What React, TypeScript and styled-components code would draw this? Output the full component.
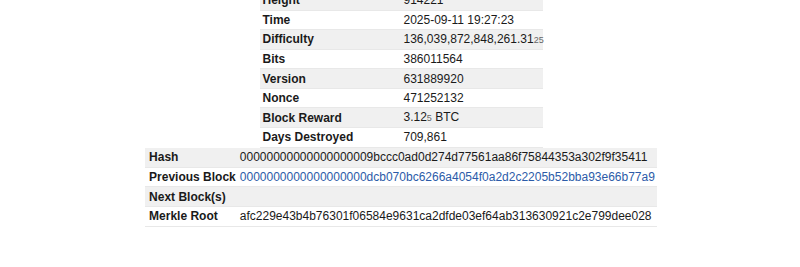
import React from "react";
import styled, { createGlobalStyle } from "styled-components";

const Global = createGlobalStyle`
  html, body { margin: 0; padding: 0; background: #ffffff; }
  body { font-family: "Liberation Sans", Arial, Helvetica, sans-serif; color: #1a1a1a; overflow: hidden; }
`;

const Page = styled.div`
  display: flex;
  flex-direction: column;
  align-items: center;
  margin-top: -9.6px;
  padding-left: 2px;
  width: 798px;
`;

const Table = styled.table<{ $width?: number; $fixed?: boolean }>`
  border-collapse: collapse;
  ${(p) => (p.$width ? `width: ${p.$width}px;` : "")}
  ${(p) => (p.$fixed ? "table-layout: fixed;" : "")}
  font-size: 12px;
`;

const Row = styled.tr<{ $shade: boolean }>`
  background: ${(p) => (p.$shade ? "#f0f0f0" : "#ffffff")};
  border-bottom: 1px solid #e8e8e8;
  height: 19.6px;
`;

const Label = styled.th<{ $pad?: number }>`
  text-align: left;
  font-weight: bold;
  padding: 0 2px 0 ${(p) => p.$pad ?? 3}px;
  line-height: 14px;
  white-space: nowrap;
  color: #1a1a1a;
`;

const Value = styled.td<{ $pad?: number }>`
  padding: 0 ${(p) => p.$pad ?? 3}px;
  line-height: 14px;
  white-space: nowrap;
  color: #1a1a1a;
`;

const Small = styled.span`
  font-size: 9px;
  color: #666666;
`;

const Link = styled.a`
  color: #2c5ba8;
  text-decoration: none;
`;

type Item = { label: string; value: React.ReactNode };

const top: Item[] = [
  { label: "Height", value: "914221" },
  { label: "Time", value: "2025-09-11 19:27:23" },
  {
    label: "Difficulty",
    value: (
      <>
        136,039,872,848,261.31<Small>25</Small>
      </>
    ),
  },
  { label: "Bits", value: "386011564" },
  { label: "Version", value: "631889920" },
  { label: "Nonce", value: "471252132" },
  {
    label: "Block Reward",
    value: (
      <>
        3.12<Small>5</Small> BTC
      </>
    ),
  },
  { label: "Days Destroyed", value: "709,861" },
];

const bottom: Item[] = [
  { label: "Hash", value: "00000000000000000009bccc0ad0d274d77561aa86f75844353a302f9f35411" },
  {
    label: "Previous Block",
    value: <Link href="#">0000000000000000000dcb070bc6266a4054f0a2d2c2205b52bba93e66b77a9</Link>,
  },
  { label: "Next Block(s)", value: "" },
  { label: "Merkle Root", value: "afc229e43b4b76301f06584e9631ca2dfde03ef64ab313630921c2e799dee028" },
];

export default function App() {
  return (
    <>
      <Global />
      <Page>
        <Table $width={283} $fixed>
          <colgroup>
            <col style={{ width: "141px" }} />
            <col />
          </colgroup>
          <tbody>
            {top.map((it, i) => (
              <Row key={it.label} $shade={i % 2 === 0}>
                <Label>{it.label}</Label>
                <Value>{it.value}</Value>
              </Row>
            ))}
          </tbody>
        </Table>
        <Table $width={509}>
          <tbody>
            {bottom.map((it, i) => (
              <Row key={it.label} $shade={i % 2 === 0}>
                <Label $pad={4}>{it.label}</Label>
                <Value $pad={2}>{it.value}</Value>
              </Row>
            ))}
          </tbody>
        </Table>
      </Page>
    </>
  );
}
